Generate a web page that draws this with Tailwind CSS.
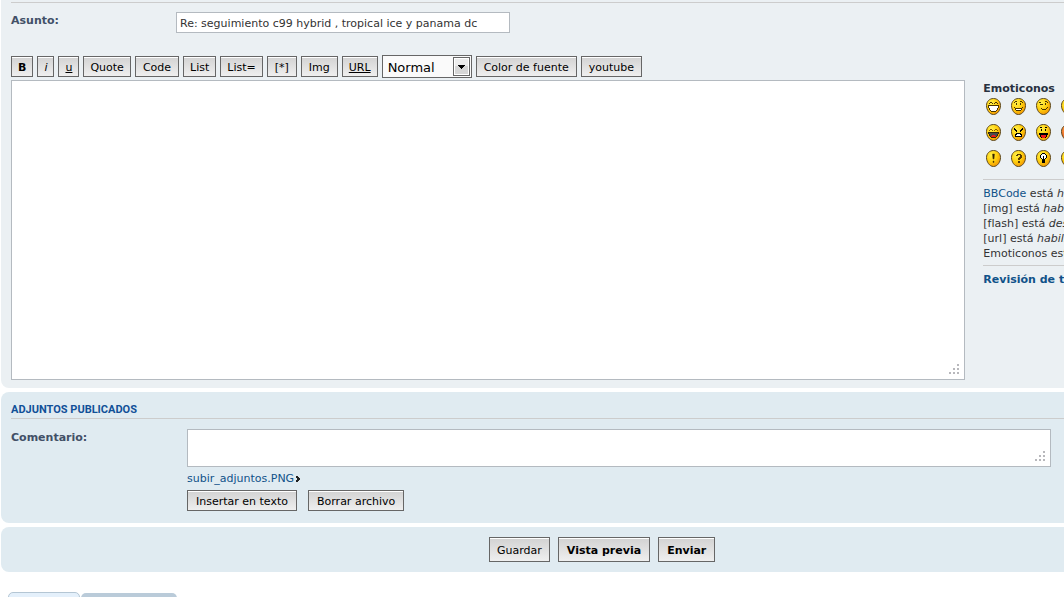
<!DOCTYPE html>
<html lang="es">
<head>
    <meta charset="UTF-8">
    <meta name="viewport" content="width=device-width, initial-scale=1.0">
    <title>Publicar una respuesta</title>
    <script src="https://cdn.jsdelivr.net/npm/@tailwindcss/browser@4"></script>
</head>
<body class="bg-white overflow-x-hidden font-['Verdana','DejaVu_Sans',sans-serif] text-[11px] leading-[15px] text-[#333333]">
    <!-- Shared shapes for the smilies -->
    <svg class="absolute size-0" aria-hidden="true">
        <defs>
            <radialGradient id="yellow" cx="0.35" cy="0.3" r="0.8">
                <stop offset="0" stop-color="#fff14a"/>
                <stop offset="0.5" stop-color="#ffcf0e"/>
                <stop offset="1" stop-color="#f08c00"/>
            </radialGradient>
            <radialGradient id="red" cx="0.35" cy="0.3" r="0.8">
                <stop offset="0" stop-color="#ffa04a"/>
                <stop offset="1" stop-color="#e04a10"/>
            </radialGradient>
            <path id="egg" d="M7.5 .5C11.5 .5 14.5 3.5 14.5 7.5C14.5 12 11.5 16.5 7.5 16.5C3.5 16.5 .5 12 .5 7.5C.5 3.5 3.5 .5 7.5 .5Z" stroke="#5c4a22"/>
        </defs>
    </svg>

    <div class="ml-px w-[113%]">
        <!-- Message editor -->
        <section class="bg-[#ebf0f3] rounded-b-lg pt-[2px] px-[10px] pb-2">
            <div class="border-t border-[#cccccc] pt-[9px] flex items-start">
                <label for="subject" class="w-[165px] pt-px font-bold text-[#425067]">Asunto:</label>
                <input id="subject" type="text" value="Re: seguimiento c99 hybrid , tropical ice y panama dc"
                       class="w-[334px] h-[21px] pt-px px-[3px] bg-white border border-[#b4bac0] text-[#333333]">
            </div>

            <div class="mt-[22px] flex items-center gap-1 text-black whitespace-nowrap">
                <button class="h-[21px] pt-[2px] px-[6px] border border-[#666666] bg-linear-to-b from-[#d2d2d2] to-[#efefef] inset-shadow-[0_1px_0_#ffffff] font-bold">B</button>
                <button class="h-[21px] pt-[2px] px-[6px] border border-[#666666] bg-linear-to-b from-[#d2d2d2] to-[#efefef] inset-shadow-[0_1px_0_#ffffff] italic">i</button>
                <button class="h-[21px] pt-[2px] px-[6px] border border-[#666666] bg-linear-to-b from-[#d2d2d2] to-[#efefef] inset-shadow-[0_1px_0_#ffffff] underline">u</button>
                <button class="h-[21px] pt-[2px] px-[6px] border border-[#666666] bg-linear-to-b from-[#d2d2d2] to-[#efefef] inset-shadow-[0_1px_0_#ffffff]">Quote</button>
                <button class="h-[21px] pt-[2px] px-[7px] border border-[#666666] bg-linear-to-b from-[#d2d2d2] to-[#efefef] inset-shadow-[0_1px_0_#ffffff]">Code</button>
                <button class="h-[21px] pt-[2px] px-[6px] border border-[#666666] bg-linear-to-b from-[#d2d2d2] to-[#efefef] inset-shadow-[0_1px_0_#ffffff]">List</button>
                <button class="h-[21px] pt-[2px] px-[6px] border border-[#666666] bg-linear-to-b from-[#d2d2d2] to-[#efefef] inset-shadow-[0_1px_0_#ffffff]">List=</button>
                <button class="h-[21px] pt-[2px] px-[7px] border border-[#666666] bg-linear-to-b from-[#d2d2d2] to-[#efefef] inset-shadow-[0_1px_0_#ffffff]">[*]</button>
                <button class="h-[21px] pt-[2px] px-[7px] border border-[#666666] bg-linear-to-b from-[#d2d2d2] to-[#efefef] inset-shadow-[0_1px_0_#ffffff]">Img</button>
                <button class="h-[21px] pt-[2px] px-[6px] border border-[#666666] bg-linear-to-b from-[#d2d2d2] to-[#efefef] inset-shadow-[0_1px_0_#ffffff] underline">URL</button>
                <div class="relative">
                    <select aria-label="Tamaño de fuente" class="block appearance-none w-[90px] h-[23px] pt-[2px] pl-[5px] border border-[#666666] bg-[#fafafa] text-[13px]">
                        <option>Diminuta</option>
                        <option>Pequeña</option>
                        <option selected>Normal</option>
                        <option>Grande</option>
                        <option>Enorme</option>
                    </select>
                    <svg class="absolute right-[2px] top-[2px] pointer-events-none" width="17" height="19" viewBox="0 0 17 19" shape-rendering="crispEdges">
                        <rect x=".5" y=".5" width="16" height="18" fill="#fff" stroke="#666"/>
                        <rect x="2" y="2" width="13" height="7" fill="#ececec"/>
                        <rect x="2" y="9" width="13" height="8" fill="#d6d6d6"/>
                        <path d="M5 8h7v1h-1v1h-1v1h-1v1h-1v-1h-1v-1h-1v-1h-1z" fill="#000"/>
                    </svg>
                </div>
                <button class="h-[21px] pt-[2px] px-[7px] border border-[#666666] bg-linear-to-b from-[#d2d2d2] to-[#efefef] inset-shadow-[0_1px_0_#ffffff]">Color de fuente</button>
                <button class="h-[21px] pt-[2px] px-[7px] border border-[#666666] bg-linear-to-b from-[#d2d2d2] to-[#efefef] inset-shadow-[0_1px_0_#ffffff]">youtube</button>
            </div>

            <div class="mt-[2px] flex gap-[18px]">
                <div class="relative flex-1">
                    <textarea aria-label="Mensaje" class="block w-full h-[300px] p-[3px] resize-none bg-white border border-[#b4bac0]"></textarea>
                    <svg class="absolute right-[6px] bottom-[6px] pointer-events-none" width="10" height="10" viewBox="0 0 10 10" fill="#b8b8bc" shape-rendering="crispEdges">
                        <path d="M8 0h2v2h-2zM4 4h2v2h-2zM8 4h2v2h-2zM0 8h2v2h-2zM4 8h2v2h-2zM8 8h2v2h-2z"/>
                    </svg>
                </div>

                <aside class="w-[210px] pt-px whitespace-nowrap">
                    <h2 class="font-bold text-[#28313f]">Emoticonos</h2>
                    <div class="mt-[2px] pl-[3px] grid grid-cols-[repeat(4,15px)] gap-x-[10px] gap-y-[9px]">
                        <svg width="15" height="17" viewBox="0 0 15 17" role="img" aria-label="Muy feliz">
                            <use href="#egg" fill="url(#yellow)"/>
                            <g shape-rendering="crispEdges">
                                <path d="M4 4h2v1h-2zM3 5h1v1h-1zM6 5h1v1h-1zM9 4h2v1h-2zM8 5h1v1h-1zM11 5h1v1h-1z" fill="#4a3500"/>
                                <path d="M2 7h11v3h-1v2h-1v1h-1v1h-5v-1h-1v-1h-1v-2h-1z" fill="#4a3500"/>
                                <path d="M3 8h9v2h-1v2h-1v1h-5v-1h-1v-2h-1z" fill="#fff"/>
                            </g>
                        </svg>
                        <svg width="15" height="17" viewBox="0 0 15 17" role="img" aria-label="Sonrisa">
                            <use href="#egg" fill="url(#yellow)"/>
                            <g shape-rendering="crispEdges">
                                <path d="M4 3h2v1h-2zM9 3h2v1h-2zM3 4h1v1h-1zM11 4h1v1h-1zM5 5h1v2h-1zM9 5h1v2h-1zM3 9h1v1h-1zM11 9h1v1h-1zM4 10h7v2h-1v1h-5v-1h-1z" fill="#4a3500"/>
                                <path d="M5 11h5v1h-5z" fill="#fff"/>
                            </g>
                        </svg>
                        <svg width="15" height="17" viewBox="0 0 15 17" role="img" aria-label="Guiño">
                            <use href="#egg" fill="url(#yellow)"/>
                            <path d="M3 4h2v1h-2zM9 3h2v1h-2zM11 4h1v1h-1zM4 6h3v1h-3zM9 5h1v2h-1zM6 11h4v1h-4zM10 10h1v1h-1zM11 9h1v1h-1zM5 10h1v1h-1z" fill="#4a3500" shape-rendering="crispEdges"/>
                        </svg>
                        <svg width="15" height="17" viewBox="0 0 15 17" role="img" aria-label="Triste">
                            <use href="#egg" fill="url(#yellow)"/>
                            <path d="M3 5h3v2h-3zM9 5h3v2h-3zM5 11h5v1h-5z" fill="#33260a" shape-rendering="crispEdges"/>
                        </svg>

                        <svg width="15" height="17" viewBox="0 0 15 17" role="img" aria-label="Risa">
                            <use href="#egg" fill="url(#yellow)"/>
                            <g shape-rendering="crispEdges">
                                <path d="M4 5h2v1h-2zM3 6h1v1h-1zM6 6h1v1h-1zM9 5h2v1h-2zM8 6h1v1h-1zM11 6h1v1h-1z" fill="#8a5a00"/>
                                <path d="M2 8h11v2h-1v2h-1v1h-1v1h-5v-1h-1v-1h-1v-2h-1z" fill="#33260a"/>
                                <path d="M3 9h9v1h-1v2h-7v-2h-1z" fill="#4c4c4c"/>
                                <path d="M6 11h3v1h1v1h-5v-1h1z" fill="#f01818"/>
                            </g>
                        </svg>
                        <svg width="15" height="17" viewBox="0 0 15 17" role="img" aria-label="Enojado">
                            <use href="#egg" fill="url(#yellow)"/>
                            <g shape-rendering="crispEdges">
                                <path d="M3 4h1v1h1v1h1v2h-1v-1h-1v-1h-1zM11 4h1v2h-1v1h-1v1h-1v-2h1v-1h1zM5 9h5v1h1v3h-7v-3h1z" fill="#000"/>
                                <path d="M6 10h3v1h1v1h-5v-1h1z" fill="#fff"/>
                            </g>
                        </svg>
                        <svg width="15" height="17" viewBox="0 0 15 17" role="img" aria-label="Lengua">
                            <use href="#egg" fill="url(#yellow)"/>
                            <g shape-rendering="crispEdges">
                                <path d="M4 3h2v1h-2zM9 3h2v1h-2zM5 5h1v2h-1zM9 5h1v2h-1zM3 9h9v2h-1v2h-1v1h-5v-1h-1v-2h-1z" fill="#000"/>
                                <path d="M5 11h5v2h-1v1h-3v-1h-1z" fill="#f01818"/>
                            </g>
                        </svg>
                        <svg width="15" height="17" viewBox="0 0 15 17" role="img" aria-label="Diablo">
                            <use href="#egg" fill="url(#red)"/>
                            <path d="M4 5h2v2h-2zM9 5h2v2h-2zM4 11h7v1h-7z" fill="#401000" shape-rendering="crispEdges"/>
                        </svg>

                        <svg width="15" height="17" viewBox="0 0 15 17" role="img" aria-label="Exclamación">
                            <use href="#egg" fill="url(#yellow)"/>
                            <path d="M6.500 4h2l-.5 5h-1zM7 11h1v1.500h-1z" fill="#201800" stroke="#6a4800" stroke-width=".5"/>
                        </svg>
                        <svg width="15" height="17" viewBox="0 0 15 17" role="img" aria-label="Pregunta">
                            <use href="#egg" fill="url(#yellow)"/>
                            <path d="M5 5h1v-1h4v1h1v3h-1v1h-1v1h-2v-2h1v-1h1v-2h-2v1h-2zM7 11h2v2h-2z" fill="#5a3c00" shape-rendering="crispEdges"/>
                        </svg>
                        <svg width="15" height="17" viewBox="0 0 15 17" role="img" aria-label="Idea">
                            <use href="#egg" fill="url(#yellow)"/>
                            <g shape-rendering="crispEdges">
                                <path d="M6 3h3v1h1v1h1v3h-1v1h-1v4h-3v-4h-1v-1h-1v-3h1v-1h1z" fill="#000"/>
                                <path d="M6 4h3v1h1v3h-1v1h-1v-3h-1v3h-1v-1h-1v-3h1z" fill="#fff"/>
                            </g>
                        </svg>
                        <svg width="15" height="17" viewBox="0 0 15 17" role="img" aria-label="Flecha">
                            <use href="#egg" fill="url(#yellow)"/>
                            <path d="M4 7h4v-2l4 3l-4 3v-2h-4z" fill="#33260a"/>
                        </svg>
                    </div>

                    <p class="mt-[12px] pt-[6px] border-t border-[#cccccc]">
                        <a href="#" class="text-[#105289]">BBCode</a> está <em>habilitado</em><br>
                        [img] está <em>habilitado</em><br>
                        [flash] está <em>deshabilitado</em><br>
                        [url] está <em>habilitado</em><br>
                        Emoticonos están <em>habilitados</em>
                    </p>
                    <p class="mt-[4px] pt-[6px] border-t border-[#cccccc]">
                        <a href="#" class="font-bold text-[#105289]">Revisión de tema</a>
                    </p>
                </aside>
            </div>
        </section>

        <!-- Attachments -->
        <section class="mt-1 bg-[#e0ebf1] rounded-lg pt-[10px] px-[10px] pb-[12px]">
            <h3 class="pb-[1px] border-b border-[#cccccc] font-['Roboto','Liberation_Sans',sans-serif] font-bold text-[#115098]">ADJUNTOS PUBLICADOS</h3>
            <div class="mt-[10px] flex">
                <label for="comment" class="w-[176px] pt-px font-bold text-[#425067]">Comentario:</label>
                <div class="flex-1 pr-[142px]">
                    <div class="relative">
                        <textarea id="comment" class="block w-full h-[38px] p-[3px] resize-none bg-white border border-[#b4bac0]"></textarea>
                        <svg class="absolute right-[6px] bottom-[6px] pointer-events-none" width="10" height="10" viewBox="0 0 10 10" fill="#b8b8bc" shape-rendering="crispEdges">
                            <path d="M8 0h2v2h-2zM4 4h2v2h-2zM8 4h2v2h-2zM0 8h2v2h-2zM4 8h2v2h-2zM8 8h2v2h-2z"/>
                        </svg>
                    </div>
                    <div class="mt-[4px] flex items-center gap-[2px]">
                        <a href="#" class="text-[#105289]">subir_adjuntos.PNG</a>
                        <svg width="4" height="6" viewBox="0 0 4 6" fill="#222" shape-rendering="crispEdges">
                            <path d="M0 0h2v1h1v1h1v2h-1v1h-1v1h-2v-2h1v-2h-1z"/>
                        </svg>
                    </div>
                    <div class="mt-[4px] flex gap-[11px] text-black">
                        <button class="h-[21px] pt-[2px] px-[8px] border border-[#666666] bg-linear-to-b from-[#d2d2d2] to-[#efefef] inset-shadow-[0_1px_0_#ffffff]">Insertar en texto</button>
                        <button class="h-[21px] pt-[2px] px-[8px] border border-[#666666] bg-linear-to-b from-[#d2d2d2] to-[#efefef] inset-shadow-[0_1px_0_#ffffff]">Borrar archivo</button>
                    </div>
                </div>
            </div>
        </section>

        <!-- Form actions -->
        <section class="mt-1 bg-[#e0ebf1] rounded-lg py-[10px] flex justify-center gap-2 text-black">
            <button class="h-[25px] pt-[2px] px-[7px] border border-[#666666] bg-linear-to-b from-[#d2d2d2] to-[#efefef] inset-shadow-[0_1px_0_#ffffff]">Guardar</button>
            <button class="h-[25px] pt-[2px] px-[8px] border border-[#666666] bg-linear-to-b from-[#d2d2d2] to-[#efefef] inset-shadow-[0_1px_0_#ffffff] font-bold">Vista previa</button>
            <button class="h-[25px] pt-[2px] px-[8px] border border-[#666666] bg-linear-to-b from-[#d2d2d2] to-[#efefef] inset-shadow-[0_1px_0_#ffffff] font-bold">Enviar</button>
        </section>

        <!-- Option tabs, cut off by the fold -->
        <div class="mt-5 h-[5px] overflow-hidden pl-[7px] flex gap-px">
            <div class="w-[72px] h-5 rounded-t-[5px] border border-[#b4c6d4] bg-[#e4f0fb]"></div>
            <div class="mt-px w-[96px] h-5 rounded-t-[5px] bg-[#bacbd9]"></div>
        </div>
    </div>
</body>
</html>
